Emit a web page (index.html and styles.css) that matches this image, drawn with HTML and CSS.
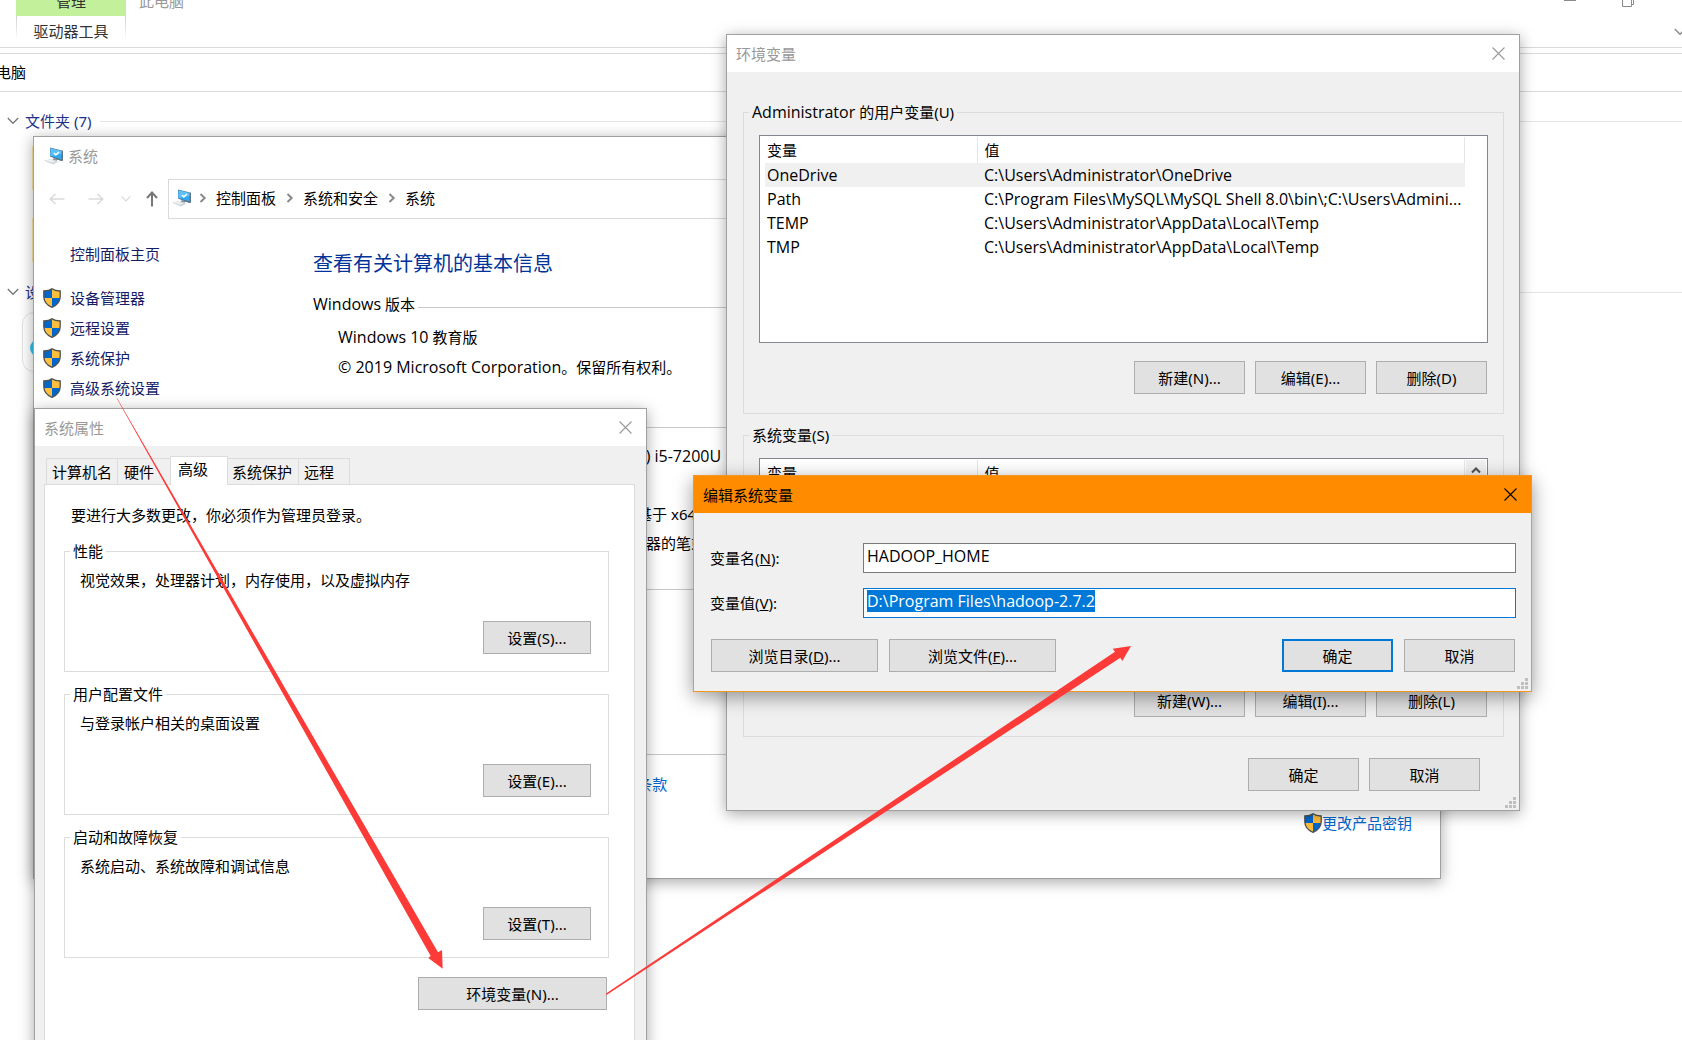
FILE: index.html
```html
<!DOCTYPE html>
<html lang="zh-CN">
<head>
<meta charset="utf-8">
<title>环境变量</title>
<link rel="stylesheet" href="styles.css">
</head>
<body>
<svg class="defs" aria-hidden="true">
  <symbol id="shield" viewBox="0 0 18 20">
    <path d="M9 .7C6.8 2.4 4 3 .8 3v5.500c0 5.200 3 8.700 8.200 10.800 5.200-2.100 8.200-5.600 8.200-10.800V3C14 3 11.200 2.400 9 .7z" fill="#0066cc"/>
    <path d="M9 1C11.200 2.500 14 3.200 17 3.200V10H9zM9 10v9C4.500 17 1.800 14 1.100 10z" fill="#ffbe3c"/>
    <path d="M9 .7C6.800 2.400 4 3 .8 3v5.500c0 5.200 3 8.700 8.200 10.800 5.200-2.100 8.200-5.600 8.200-10.800V3C14 3 11.200 2.400 9 .7z" fill="none" stroke="#55544c" stroke-width="1.300"/>
  </symbol>
  <symbol id="computer" viewBox="0 0 20 18">
    <path d="M0 13.500l6-1.300 8.500 2.500-5.500 2.800z" fill="#cfd6dc"/>
    <path d="M4 12.800l6.500 1.900M2.500 13.200l6.500 2" stroke="#f4f6f8"/>
    <path d="M10 11l4.500 1.500-2 1.300-4-1z" fill="#8b979f"/>
    <path d="M6 .5l13 3.300v10L17 14 6 9.500z" fill="#5d7382"/>
    <path d="M6.500 1.200l11 2.900v8.300l-11-3.400z" fill="#2fa9f5"/>
    <path d="M6.500 1.200l11 2.900v3l-11 1.900z" fill="#5cc0fa"/>
    <path d="M10 6l1.800 2L15 5" fill="none" stroke="#fff" stroke-width="1.500"/>
  </symbol>
  <symbol id="close" viewBox="0 0 13 13"><path d="M.5.5l12 12M12.500.5l-12 12" fill="none" stroke="currentColor" stroke-width="1.100"/></symbol>
  <symbol id="down" viewBox="0 0 12 8"><path d="M.8 1L6 6.300 11.200 1" fill="none" stroke="currentColor" stroke-width="1.300"/></symbol>
  <symbol id="next" viewBox="0 0 8 10"><path d="M1.500 1L5.700 5 1.500 9" fill="none" stroke="currentColor" stroke-width="1.900"/></symbol>
  <symbol id="arrow" viewBox="0 0 16 12"><path d="M1 6h14.500M6.500 1L1.200 6l5.300 5" fill="none" stroke="currentColor" stroke-width="1.500"/></symbol>
  <symbol id="grip" viewBox="0 0 11 11"><path d="M8 0h3v3H8zM4 4h3v3H4zM8 4h3v3H8zM0 8h3v3H0zM4 8h3v3H4zM8 8h3v3H8z" fill="#bfbfbf"/></symbol>
</svg>

<main class="desktop">
  <section class="explorer" aria-label="此电脑">
    <header class="ribbon">
      <div class="ribbon-tab">
        <div class="ribbon-group">管理</div>
        <a class="ribbon-tool" href="#">驱动器工具</a>
      </div>
      <div class="explorer-title">此电脑</div>
      <div class="explorer-controls">
        <svg width="70" height="8" viewBox="0 0 70 8" fill="none" stroke="#8a8a8a"><path d="M0 .5h12M58.500-3v9.500h9V-3M67.500 4.500h2V-3"/></svg>
        <svg class="expand" width="12" height="8"><use href="#down"/></svg>
      </div>
    </header>
    <div class="explorer-address">电脑</div>
    <h2 class="folder-group"><svg width="12" height="8"><use href="#down"/></svg>文件夹 (7)</h2>
    <div class="folders"><i></i><i></i></div>
    <h2 class="folder-group">
      <svg width="12" height="8"><use href="#down"/></svg>设</h2>
    <div class="drive"><i></i></div>
  </section>

  <section class="window system" aria-label="系统">
    <header class="system-title"><svg width="20" height="18"><use href="#computer"/></svg>系统</header>
    <nav class="system-nav">
      <div class="nav-arrows">
        <svg class="faint" width="16" height="12"><use href="#arrow"/></svg>
        <svg class="faint flip" width="16" height="12"><use href="#arrow"/></svg>
        <svg class="faint recent" width="10" height="8"><use href="#down"/></svg>
        <svg class="up" width="12" height="16" viewBox="0 0 12 16"><path d="M6 15.500V1.500M1 7l5-5.500L11 7" fill="none" stroke="#777" stroke-width="2"/></svg>
      </div>
      <div class="crumbs">
        <svg width="20" height="18"><use href="#computer"/></svg>
        <svg class="sep" width="8" height="10"><use href="#next"/></svg><span>控制面板</span>
        <svg class="sep" width="8" height="10"><use href="#next"/></svg><span>系统和安全</span>
        <svg class="sep" width="8" height="10"><use href="#next"/></svg><span>系统</span>
      </div>
    </nav>
    <div class="system-body">
      <aside class="side">
        <a class="home" href="#">控制面板主页</a>
        <a href="#"><svg width="18" height="20"><use href="#shield"/></svg>设备管理器</a>
        <a href="#"><svg width="18" height="20"><use href="#shield"/></svg>远程设置</a>
        <a href="#"><svg width="18" height="20"><use href="#shield"/></svg>系统保护</a>
        <a href="#"><svg width="18" height="20"><use href="#shield"/></svg>高级系统设置</a>
      </aside>
      <div class="info">
        <h1>查看有关计算机的基本信息</h1>
        <h3><span><span class="latin">Windows</span> 版本</span></h3>
        <p><span class="latin">Windows 10</span> 教育版</p>
        <p><span class="latin">© 2019 Microsoft Corporation</span>。保留所有权利。</p>
        <h3 class="specs-title">系统</h3>
        <dl>
          <dt>处理器:</dt><dd class="latin">Intel(R) Core(TM) i5-7200U CPU</dd>
          <dt>已安装的内存:</dt><dd>8.00 GB</dd>
          <dt>系统类型:</dt><dd>64 位操作系统，基于 x64 的处理器</dd>
          <dt>笔和触控:</dt><dd>没有可用于此显示器的笔或触控输入</dd>
        </dl>
        <h3 class="name-title">计算机名</h3>
        <h3 class="activation-title">Windows 激活</h3>
        <div class="activation"><span>Windows 已激活</span><a href="#">阅读 Microsoft 软件许可条款</a></div>
        <a class="product-key" href="#"><svg width="18" height="20"><use href="#shield"/></svg>更改产品密钥</a>
      </div>
    </div>
  </section>

  <section class="window properties" aria-label="系统属性">
    <header class="titlebar">系统属性<button class="close" aria-label="关闭"><svg width="13" height="13"><use href="#close"/></svg></button></header>
    <div class="properties-body">
      <div class="tabs" role="tablist">
        <button role="tab" class="tab-wide">计算机名</button>
        <button role="tab" class="tab-hardware">硬件</button>
        <button role="tab" class="active" aria-selected="true">高级</button>
        <button role="tab" class="tab-wide tab-protect">系统保护</button>
        <button role="tab" class="tab-remote">远程</button>
      </div>
      <div class="tab-page">
        <p class="notice">要进行大多数更改，你必须作为管理员登录。</p>
        <fieldset><legend>性能</legend><p>视觉效果，处理器计划，内存使用，以及虚拟内存</p><button class="btn">设置(S)...</button></fieldset>
        <fieldset><legend>用户配置文件</legend><p>与登录帐户相关的桌面设置</p><button class="btn">设置(E)...</button></fieldset>
        <fieldset><legend>启动和故障恢复</legend><p>系统启动、系统故障和调试信息</p><button class="btn">设置(T)...</button></fieldset>
        <button class="btn env-btn">环境变量(N)...</button>
      </div>
    </div>
  </section>

  <section class="window environment" aria-label="环境变量">
    <header class="titlebar">环境变量<button class="close" aria-label="关闭"><svg width="13" height="13"><use href="#close"/></svg></button></header>
    <div class="environment-body">
      <fieldset>
        <legend><span class="latin">Administrator</span> 的用户变量(U)</legend>
        <div class="list">
          <table>
            <thead><tr><th>变量</th><th>值</th></tr></thead>
            <tbody class="latin">
              <tr class="current"><td>OneDrive</td><td>C:\Users\Administrator\OneDrive</td></tr>
              <tr><td>Path</td><td>C:\Program Files\MySQL\MySQL Shell 8.0\bin\;C:\Users\Admini...</td></tr>
              <tr><td>TEMP</td><td>C:\Users\Administrator\AppData\Local\Temp</td></tr>
              <tr><td>TMP</td><td>C:\Users\Administrator\AppData\Local\Temp</td></tr>
            </tbody>
          </table>
        </div>
        <div class="actions"><button class="btn">新建(N)...</button><button class="btn">编辑(E)...</button><button class="btn">删除(D)</button></div>
      </fieldset>
      <fieldset>
        <legend>系统变量(S)</legend>
        <div class="list">
          <table>
            <thead><tr><th>变量</th><th>值</th></tr></thead>
          </table>
          <div class="scrollbar"><svg width="10" height="8" viewBox="0 0 10 8"><path d="M1 6.500l4-4 4 4" fill="none" stroke="#555" stroke-width="2.200"/></svg></div>
        </div>
        <div class="actions"><button class="btn">新建(W)...</button><button class="btn">编辑(I)...</button><button class="btn">删除(L)</button></div>
      </fieldset>
      <div class="actions dialog-actions"><button class="btn">确定</button><button class="btn">取消</button></div>
    </div>
    <svg class="grip" width="11" height="11"><use href="#grip"/></svg>
  </section>

  <form class="window edit" aria-label="编辑系统变量">
    <header class="titlebar">编辑系统变量<button type="button" class="close" aria-label="关闭"><svg width="13" height="13"><use href="#close"/></svg></button></header>
    <div class="fields">
      <label for="name">变量名(<u>N</u>):</label><input class="latin" id="name" type="text" value="HADOOP_HOME">
      <label for="value">变量值(<u>V</u>):</label><input class="latin" id="value" type="text" value="D:\Program Files\hadoop-2.7.2">
    </div>
    <div class="edit-actions">
      <button type="button" class="btn browse">浏览目录(<u>D</u>)...</button>
      <button type="button" class="btn browse">浏览文件(<u>F</u>)...</button>
      <span class="spacer"></span>
      <button type="button" class="btn default">确定</button>
      <button type="button" class="btn">取消</button>
    </div>
    <svg class="grip" width="11" height="11"><use href="#grip"/></svg>
  </form>

  <svg class="annotations" width="1140" height="1000" viewBox="0 0 1140 1000" fill="#fc3a38" aria-hidden="true">
    <path d="M117 398L438 952.300 442 950 442.700 968.700 428.300 958 430.700 956 116.500 398z"/>
    <path d="M606 993.500L1115 651.700 1112.700 648.700 1131 646 1122.300 661 1120.300 657.700 606.500 995z"/>
  </svg>
</main>
<script src="main.js"></script>
</body>
</html>
```
FILE: styles.css
```css
* { box-sizing: border-box; }

body {
  margin: 0;
  color: #000;
  background: #fff;
  font: 15px/20px "Noto Sans", "Noto Sans CJK SC", sans-serif;
}

h1, h2, h3, p, dl, dd { margin: 0; font-weight: 400; }
a { color: #0066cc; text-decoration: none; }
button, input { font: inherit; color: inherit; }
svg { display: block; flex: none; }
.defs { display: none; }
.latin { font-family: "Open Sans", "Noto Sans CJK SC", sans-serif; font-size: 16px; }

.desktop {
  position: relative;
  height: 100vh;
  overflow: hidden;
  white-space: nowrap;
}

/* File explorer in the background */
.ribbon {
  display: flex;
  height: 48px;
  padding-left: 16px;
  border-bottom: 1px solid #d9d9d9;
}
.ribbon-tab { width: 110px; text-align: center; color: #333; }
.ribbon-group { height: 16px; line-height: 2px; background: #c3f09a; }
.ribbon-tool {
  display: block;
  height: 24px;
  line-height: 30px;
  color: #333;
  border: solid;
  border-width: 0 1px;
  border-image: linear-gradient(#ccc, #fff) 1;
}
.explorer-title { flex: 1; padding-left: 13px; line-height: 2px; color: #999; }
.explorer-controls { width: 118px; color: #888; }
.expand { margin: 20px 0 0 110px; }
.explorer-address {
  height: 39px;
  margin-top: 5px;
  line-height: 36px;
  text-indent: -4px;
  border: solid #d9d9d9;
  border-width: 1px 0;
}
.folder-group {
  display: flex;
  align-items: center;
  gap: 6px;
  padding-left: 7px;
  color: #1e3287;
  font-size: 15px;
}
.explorer-address + .folder-group { margin-top: 19px; }
.folder-group svg { color: #777; }
.folder-group::after { content: ""; flex: 1; height: 1px; margin-left: 3px; background: #e5e5e5; }
.folders {
  display: flex;
  flex-direction: column;
  gap: 28px;
  height: 151px;
  padding: 15px 0 0 32px;
}
.folders i { width: 60px; height: 44px; background: #ffe9a6; }
.drive {
  width: 300px;
  height: 60px;
  margin: 10px 0 0 22px;
  padding: 26px 0 0 7px;
  border: 1px solid #e5e5e5;
  border-radius: 12px;
}
.drive i { display: block; width: 18px; height: 18px; border-radius: 50%; background: #35c3ea; }

/* Windows */
.window {
  position: absolute;
  background: #f0f0f0;
  border: 1px solid #a0a0a0;
  box-shadow: 0 3px 14px rgba(0, 0, 0, .35);
}
.titlebar {
  display: flex;
  align-items: center;
  justify-content: space-between;
  height: 37px;
  padding: 0 14px 0 9px;
  color: #999;
  background: #fff;
}
.close { padding: 0; border: 0; background: none; }
.btn {
  width: 111px;
  height: 33px;
  padding: 0;
  line-height: 20px;
  background: #e1e1e1;
  border: 1px solid #adadad;
}
fieldset { min-width: 0; margin: 0; padding: 0; border: 1px solid #dcdcdc; }
legend { margin-left: 5px; padding: 0 3px; }
.grip { position: absolute; right: 3px; bottom: 2px; }

/* System information */
.system { left: 33px; top: 136px; width: 1408px; height: 743px; background: #fff; }
.system-title {
  display: flex;
  align-items: center;
  gap: 4px;
  height: 38px;
  padding-left: 10px;
  color: #999;
}
.system-nav { display: flex; height: 40px; margin-top: 4px; }
.nav-arrows {
  display: flex;
  align-items: center;
  gap: 23px;
  width: 134px;
  padding-left: 15px;
  color: #777;
}
.faint { color: #dadada; }
.flip { transform: rotate(180deg); }
.recent { margin-left: -6px; }
.up { margin-left: -8px; }
.crumbs {
  display: flex;
  flex: 1;
  align-items: center;
  padding: 0 0 2px 3px;
  border: 1px solid #d9d9d9;
}
.sep { margin: 0 9px 0 10px; color: #888; }
.crumbs svg:first-child + .sep { margin: 0 9px 0 7px; }
.system-body { display: flex; }
.side { width: 279px; padding: 20px 0 0 9px; }
.side a {
  display: flex;
  align-items: center;
  gap: 9px;
  height: 30px;
  color: #151c66;
}
.side .home { margin-bottom: 14px; padding-left: 27px; }
.info { flex: 1; padding: 30px 28px 0 0; }
.info h1 { font-size: 20px; line-height: 30px; color: #003399; }
.info h3 { display: flex; align-items: center; gap: 3px; height: 20px; margin: 15px 0 8px; font-size: 15px; }
.info h3::after { content: ""; flex: 1; height: 1px; margin-top: 6px; background: #c8c8c8; }
.info p { height: 30px; padding-left: 25px; line-height: 30px; }
.info .specs-title { margin-top: 32px; }
.info dl {
  display: grid;
  grid-template-columns: 188px 1fr;
  grid-auto-rows: 29px;
  padding-left: 25px;
  line-height: 29px;
}
.info .name-title { margin-top: 18px; }
.info .activation-title { margin: 145px 0 13px; }
.activation { display: flex; gap: 22px; padding-left: 25px; }
.product-key { display: flex; align-items: center; justify-content: flex-end; margin-top: 19px; }

/* System properties */
.properties { left: 34px; top: 408px; width: 613px; height: 730px; }
.properties-body { padding: 10px 11px 10px 9px; }
.tabs { display: flex; align-items: flex-end; height: 28px; padding-left: 2px; }
.tabs button {
  width: 70px;
  height: 26px;
  padding: 0 0 0 5px;
  text-align: left;
  line-height: 20px;
  background: #f0f0f0;
  border: 1px solid #dcdcdc;
  border-bottom: 0;
  border-right: 0;
}
.tabs .tab-wide { width: 71px; }
.tabs .tab-hardware { width: 53px; padding-left: 6px; }
.tabs .active {
  position: relative;
  width: 58px;
  height: 29px;
  margin-bottom: -1px;
  padding: 0 0 4px 7px;
  background: #fff;
  border-right: 1px solid #dcdcdc;
}
.tabs .tab-protect { width: 70px; padding-left: 4px; border-left: 0; }
.tabs .tab-remote { width: 52px; border-right: 1px solid #dcdcdc; }
.tab-page {
  display: flex;
  flex-direction: column;
  height: 640px;
  padding: 20px 25px 0 19px;
  background: #fff;
  border: 1px solid #dcdcdc;
}
.notice { margin: 0 0 16px 7px; }
.tab-page fieldset {
  display: flex;
  flex-direction: column;
  height: 131px;
  margin-bottom: 12px;
  padding: 9px 17px 0 15px;
}
.tab-page fieldset .btn { align-self: flex-end; width: 108px; margin-top: 31px; }
.tab-page .env-btn { align-self: flex-end; width: 189px; margin: 7px 2px 0 0; }
.tab-page legend { margin-left: -10px; }

/* Environment variables */
.environment { left: 726px; top: 34px; width: 794px; height: 777px; }
.environment-body { padding: 30px 15px 0 16px; }
.environment fieldset { height: 312px; margin-bottom: 11px; padding: 13px 15px 0; }
.environment legend { height: 20px; margin-left: -10px; }
.list {
  display: flex;
  justify-content: space-between;
  height: 208px;
  padding: 1px 1px 0 5px;
  background: #fff;
  border: 1px solid #828790;
}
table { width: 700px; table-layout: fixed; border-collapse: collapse; align-self: flex-start; }
th, td { height: 24px; padding: 0 0 0 7px; text-align: left; font-weight: 400; }
th { height: 26px; border-right: 1px solid #e5e5e5; }
th:first-child, td:first-child { width: 212px; padding-left: 2px; }
.current { background: #f0f0f0; }
.scrollbar { width: 20px; height: 204px; padding: 6px 5px; background: #f0f0f0; }
.actions { display: flex; justify-content: flex-end; gap: 10px; margin: 18px 1px 0 0; }
.dialog-actions { margin: 21px 24px 0 0; }

/* Edit system variable */
.edit {
  left: 693px;
  top: 475px;
  width: 839px;
  height: 217px;
  border-color: #f5961e;
  box-shadow: 0 5px 18px rgba(0, 0, 0, .4);
}
.edit .titlebar { color: #000; background: #ff8c00; }
.fields {
  display: grid;
  grid-template-columns: 153px 1fr;
  row-gap: 15px;
  padding: 30px 15px 0 16px;
}
.fields label { padding-top: 5px; }
.fields input {
  width: 100%;
  height: 30px;
  padding: 0 3px 4px;
  background: #fff;
  border: 1px solid #7a7a7a;
  border-radius: 0;
  outline: 0;
}
.fields input:focus { border-color: #0078d7; }
.fields input::selection { color: #fff; background: #0078d7; }
.edit-actions { display: flex; gap: 11px; padding: 21px 16px 0 17px; }
.browse { width: 167px; }
.spacer { flex: 1; }
.default { border: 2px solid #0078d7; }

.annotations { position: absolute; left: 0; top: 0; pointer-events: none; }
```
FILE: main.js
```js
// Open the dialog with the variable's value ready to be overwritten.
const value = document.getElementById('value');
value.focus();
value.select();
```
